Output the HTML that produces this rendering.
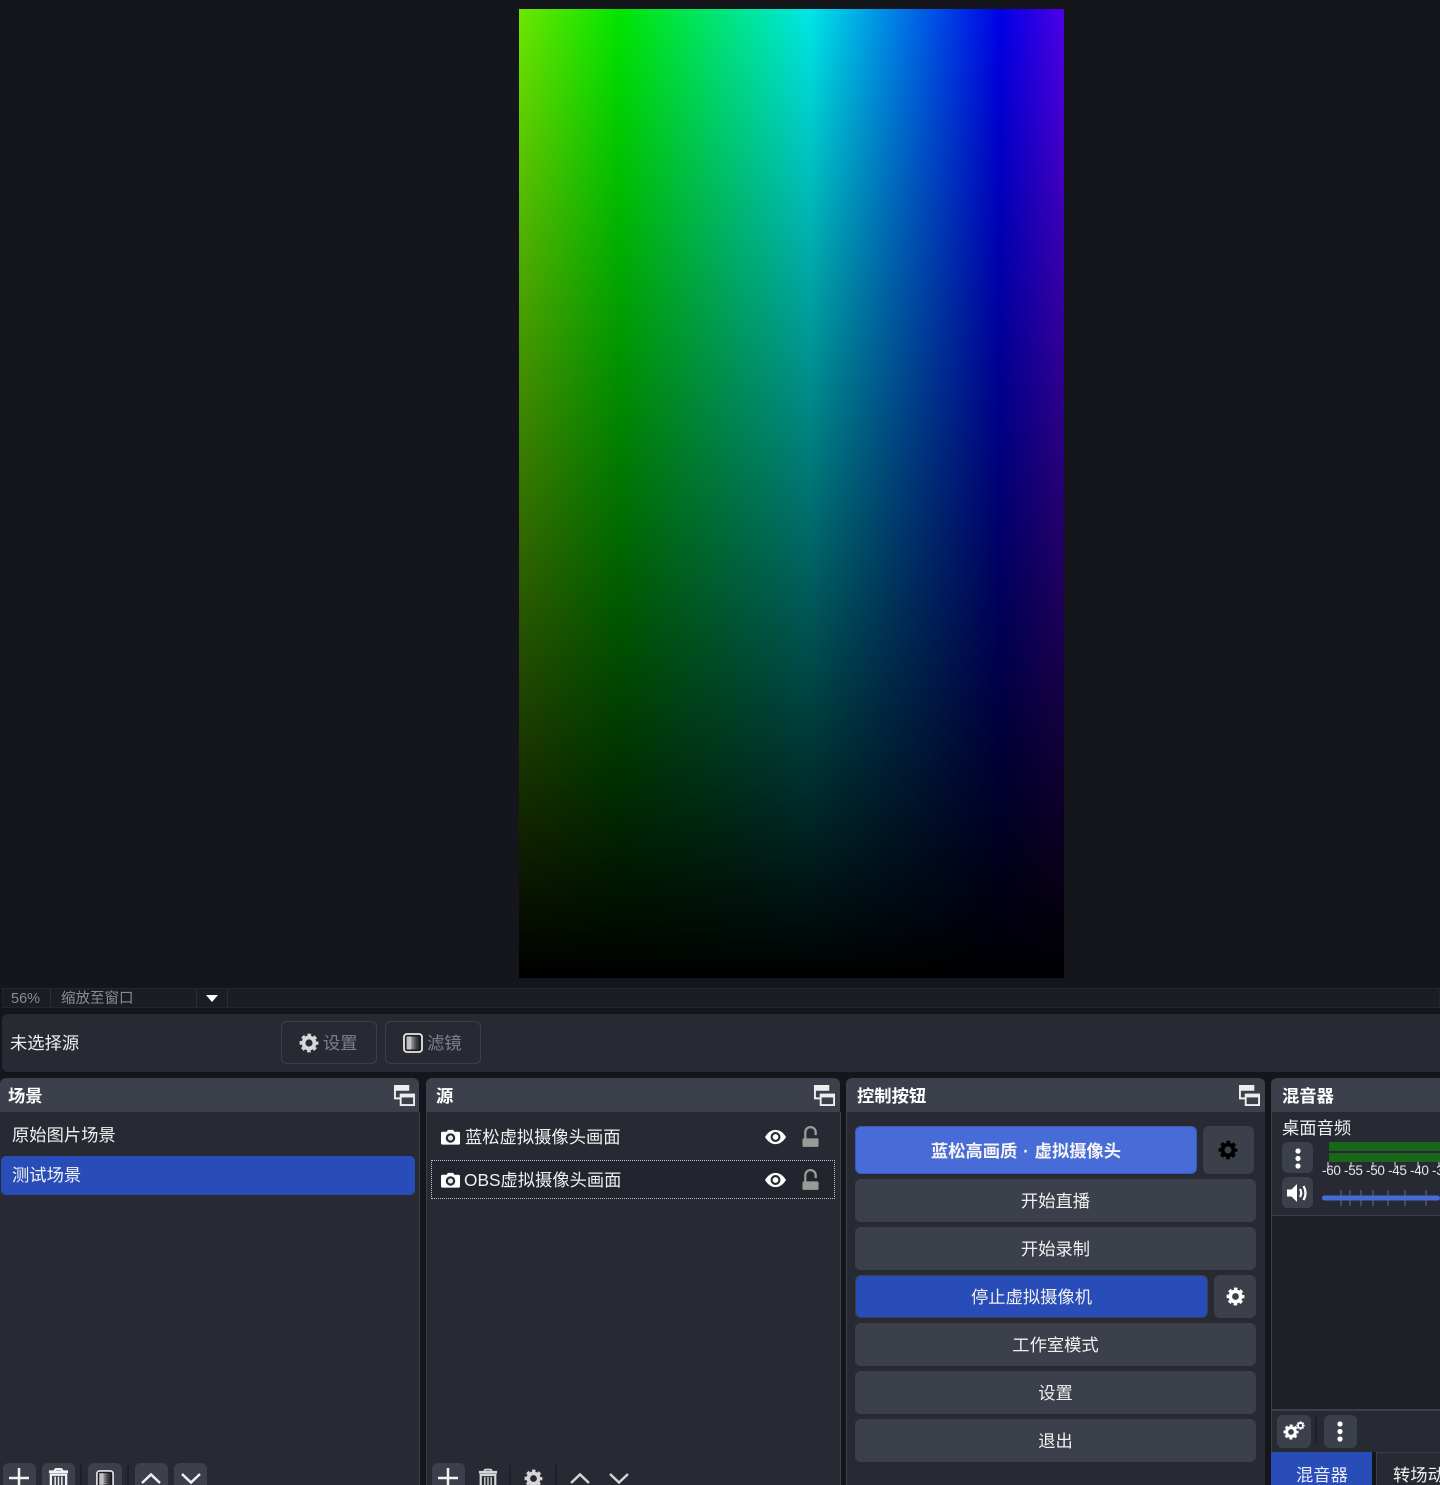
<!DOCTYPE html>
<html lang="zh"><head><meta charset="utf-8"><style>
*{box-sizing:border-box}
html,body{margin:0;padding:0;width:1440px;height:1485px;overflow:hidden;background:#14161c}
#root{width:1440px;height:1485px;position:relative;overflow:hidden;background:#14161c;font-family:"Liberation Sans","Noto Sans CJK SC",sans-serif;font-size:17.3px;color:#fff}
.a{position:absolute}
.t{position:absolute;white-space:nowrap;line-height:24px;height:24px}
.hd{position:absolute;top:1078px;height:34px;background:#3c404b;border-radius:6px 6px 0 0}
.body{position:absolute;top:1112px;height:373px;background:#272a33}
.b{position:absolute;font-weight:700;top:1084px;line-height:24px;white-space:nowrap}
.btn{position:absolute;background:#3c404b;border-radius:6px;display:flex;align-items:center;justify-content:center;color:#f0f0f0;padding-bottom:2px}
.tb{position:absolute;background:#3c404b;border-radius:6px}
svg{position:absolute;display:block;overflow:visible}
.sep{position:absolute;width:2px;background:#1e2028}
.m{position:absolute;top:1158px;line-height:24px;font-size:13.500px;color:#e6e6e6;letter-spacing:-.3px;white-space:nowrap}
</style></head><body><div id="root">
<svg width="0" height="0" style="position:absolute"><defs>
<linearGradient id="fg" x1="0" x2="1" y1="0" y2="0"><stop offset="0" stop-color="#b8b8b8"/><stop offset=".35" stop-color="#c8c8c8"/><stop offset=".7" stop-color="#555"/><stop offset="1" stop-color="#1c1e24"/></linearGradient>
<symbol id="gear" viewBox="0 0 24 24"><circle cx="12" cy="12" r="6.600" fill="none" stroke="currentColor" stroke-width="4.600"/><circle cx="12" cy="12" r="9.600" fill="none" stroke="currentColor" stroke-width="3.400" stroke-dasharray="4.300 3.240" stroke-dashoffset="2.150"/></symbol>
<symbol id="float" viewBox="0 0 22 22"><path d="M1 1h14v4H1zM1 5v9h6" fill="none" stroke="#eee" stroke-width="2"/><rect x="1" y="1" width="14" height="4" fill="#eee"/><rect x="7" y="10" width="14" height="11" fill="#3c404b" stroke="#eee" stroke-width="2"/><rect x="7" y="10" width="14" height="3" fill="#eee"/></symbol>
<symbol id="cam" viewBox="0 0 20 16"><path d="M1.500 2.500H6L7.200 .5h5.600L14 2.500h4.500a1.500 1.500 0 0 1 1.500 1.500v10.500a1.500 1.500 0 0 1-1.500 1.500H1.500A1.500 1.500 0 0 1 0 14.500V4a1.500 1.500 0 0 1 1.500-1.500z" fill="#fff"/><circle cx="10" cy="9" r="5" fill="#272a33"/><circle cx="10" cy="9" r="2.700" fill="#e8e8e8"/></symbol>
<symbol id="eye" viewBox="0 0 22 16"><path d="M0 8C3 3 7 .5 11 .5S19 3 22 8c-3 5-7 7.500-11 7.500S3 13 0 8z" fill="#fff"/><circle cx="11" cy="8" r="5.200" fill="#272a33"/><circle cx="11" cy="8" r="3" fill="#fff"/></symbol>
<symbol id="lock" viewBox="0 0 18 22"><path d="M3.500 14V6.500a5.500 5.500 0 0 1 11 0v3" fill="none" stroke="#9b9b95" stroke-width="2.400"/><rect x="0.500" y="13" width="17" height="9" rx="1.500" fill="#9b9b95"/></symbol>
<symbol id="trash" viewBox="0 0 22 24"><path d="M1 4h20" stroke="currentColor" stroke-width="3"/><path d="M7 3q0-2 2-2h4q2 0 2 2" fill="none" stroke="currentColor" stroke-width="2"/><path d="M3 7h16v17H3z" fill="none" stroke="currentColor" stroke-width="2.400"/><path d="M7.500 9v13M11 9v13M14.500 9v13" stroke="currentColor" stroke-width="1.500"/></symbol>
<symbol id="filter" viewBox="0 0 20 20"><rect x="1" y="1" width="18" height="18" rx="3" fill="#1c1e24" stroke="#e8e8e8" stroke-width="1.800"/><rect x="3.500" y="3.500" width="13" height="13" fill="url(#fg)"/><path d="M9 3.500v13M11 3.500v13M13 3.500v13" stroke="#2a2c32" stroke-width="1" stroke-dasharray="1 1"/></symbol>
</defs></svg>

<!-- preview -->
<div class="a" style="left:519px;top:9px;width:545px;height:969px;background:linear-gradient(to bottom,rgba(0,0,0,0) 0%,rgba(0,0,0,.5) 50%,rgba(0,0,0,1) 100%),linear-gradient(to right,#6ee600 0,#00e600 101px,#00e6e6 291px,#0000e6 481px,#4d00e6 545px)"></div>

<!-- status bar -->
<div class="a" style="left:2px;top:988px;width:1438px;height:20px;background:#1b1d24;border:1px solid #23262e"></div>
<div class="a" style="left:50px;top:989px;width:1px;height:18px;background:#2b2e37"></div>
<div class="a" style="left:196px;top:989px;width:1px;height:18px;background:#2b2e37"></div>
<div class="a" style="left:227px;top:989px;width:1px;height:18px;background:#2b2e37"></div>
<div class="t" style="left:11px;top:987px;font-size:14.500px;color:#8a8c91">56%</div>
<div class="t" style="left:61px;top:987px;font-size:14.500px;color:#8a8c91">缩放至窗口</div>
<svg style="left:206px;top:995px" width="12" height="7"><path d="M0 0h12L6 7z" fill="#fff"/></svg>

<!-- properties bar -->
<div class="a" style="left:2px;top:1014px;width:1438px;height:58px;background:#272a33;border-radius:6px 0 0 6px"></div>
<div class="t" style="left:10px;top:1031px;color:#f0f0f0">未选择源</div>
<div class="a" style="left:281px;top:1021px;width:96px;height:43px;border:1px solid #3c404b;border-radius:6px"></div>
<svg style="left:299px;top:1033px;color:#d8d8d8" width="20" height="20"><use href="#gear" width="20" height="20"/></svg>
<div class="t" style="left:323px;top:1031px;color:#7f8188">设置</div>
<div class="a" style="left:385px;top:1021px;width:96px;height:43px;border:1px solid #3c404b;border-radius:6px"></div>
<svg style="left:403px;top:1033px" width="20" height="20"><use href="#filter" width="20" height="20"/></svg>
<div class="t" style="left:427px;top:1031px;color:#7f8188">滤镜</div>

<!-- docks -->
<div class="body" style="left:0;width:419px"></div>
<div class="hd" style="left:0;width:419px"></div>
<div class="body" style="left:426px;width:414px"></div>
<div class="hd" style="left:426px;width:414px"></div>
<div class="body" style="left:846px;width:419px"></div>
<div class="hd" style="left:846px;width:419px"></div>
<div class="body" style="left:1271px;width:169px;height:340px"></div>
<div class="hd" style="left:1271px;width:169px;border-radius:6px 0 0 0"></div>
<div class="a" style="left:419px;top:1112px;width:1px;height:373px;background:#3c404b"></div>
<div class="a" style="left:426px;top:1112px;width:1px;height:373px;background:#3c404b"></div>
<div class="a" style="left:840px;top:1112px;width:1px;height:373px;background:#3c404b"></div>
<div class="a" style="left:846px;top:1112px;width:1px;height:373px;background:#3c404b"></div>
<div class="a" style="left:1271px;top:1112px;width:1px;height:340px;background:#3c404b"></div>

<div class="b" style="left:8px">场景</div>
<div class="b" style="left:436px">源</div>
<div class="b" style="left:857px">控制按钮</div>
<div class="b" style="left:1282px">混音器</div>
<svg style="left:394px;top:1085px" width="21" height="21"><use href="#float" width="21" height="21"/></svg>
<svg style="left:814px;top:1085px" width="21" height="21"><use href="#float" width="21" height="21"/></svg>
<svg style="left:1239px;top:1085px" width="21" height="21"><use href="#float" width="21" height="21"/></svg>

<!-- scenes -->
<div class="t" style="left:12px;top:1123px;color:#f0f0f0">原始图片场景</div>
<div class="a" style="left:1px;top:1156px;width:414px;height:39px;background:#284cb8;border-radius:5px"></div>
<div class="t" style="left:12px;top:1163px;color:#f4f4f4">测试场景</div>

<div class="tb" style="left:3px;top:1463px;width:33px;height:30px"></div>
<svg style="left:9px;top:1468px" width="20" height="16"><path d="M10 0v20M0 10h20" stroke="#f2f2f2" stroke-width="2.500"/></svg>
<div class="tb" style="left:42px;top:1463px;width:33px;height:30px"></div>
<svg style="left:48px;top:1468px;color:#f2f2f2" width="21" height="23"><use href="#trash" width="21" height="23"/></svg>
<div class="sep" style="left:80px;top:1465px;height:20px"></div>
<div class="tb" style="left:88px;top:1463px;width:34px;height:30px"></div>
<svg style="left:96px;top:1470px" width="18" height="20"><use href="#filter" width="18" height="18"/></svg>
<div class="sep" style="left:127px;top:1465px;height:20px"></div>
<div class="tb" style="left:135px;top:1463px;width:33px;height:30px"></div>
<svg style="left:141px;top:1473px" width="20" height="11"><path d="M1 10L10 1.500 19 10" fill="none" stroke="#f2f2f2" stroke-width="2.500"/></svg>
<div class="tb" style="left:174px;top:1463px;width:33px;height:30px"></div>
<svg style="left:181px;top:1473px" width="20" height="11"><path d="M1 1l9 8.500L19 1" fill="none" stroke="#f2f2f2" stroke-width="2.500"/></svg>

<!-- sources -->
<svg style="left:441px;top:1129px" width="19" height="16"><use href="#cam" width="19" height="16"/></svg>
<div class="t" style="left:465px;top:1125px;color:#f0f0f0">蓝松虚拟摄像头画面</div>
<svg style="left:765px;top:1129px" width="21" height="16"><use href="#eye" width="21" height="16"/></svg>
<svg style="left:802px;top:1126px" width="17" height="21"><use href="#lock" width="17" height="21"/></svg>
<div class="a" style="left:431px;top:1160px;width:404px;height:39px;border:1px dotted #c8c8c8;background:#22252d"></div>
<svg style="left:441px;top:1172px" width="19" height="16"><use href="#cam" width="19" height="16"/></svg>
<div class="t" style="left:464px;top:1168px;color:#f0f0f0">OBS虚拟摄像头画面</div>
<svg style="left:765px;top:1172px" width="21" height="16"><use href="#eye" width="21" height="16"/></svg>
<svg style="left:802px;top:1169px" width="17" height="21"><use href="#lock" width="17" height="21"/></svg>

<div class="tb" style="left:432px;top:1463px;width:33px;height:30px"></div>
<svg style="left:438px;top:1468px" width="20" height="16"><path d="M10 0v20M0 10h20" stroke="#f2f2f2" stroke-width="2.500"/></svg>
<svg style="left:478px;top:1468px;color:#d5d5d5" width="20" height="23"><use href="#trash" width="20" height="23"/></svg>
<div class="sep" style="left:509px;top:1465px;height:20px"></div>
<svg style="left:524px;top:1469px;color:#d5d5d5" width="19" height="19"><use href="#gear" width="19" height="19"/></svg>
<div class="sep" style="left:555px;top:1465px;height:20px"></div>
<svg style="left:570px;top:1473px" width="20" height="11"><path d="M1 10L10 1.500 19 10" fill="none" stroke="#d5d5d5" stroke-width="2.500"/></svg>
<svg style="left:609px;top:1473px" width="20" height="11"><path d="M1 1l9 8.500L19 1" fill="none" stroke="#d5d5d5" stroke-width="2.500"/></svg>

<!-- controls -->
<div class="btn" style="left:855px;top:1126px;width:342px;height:48px;background:#476bd7;border:1px solid #3a5bbd;font-weight:700;color:#f4f4f4;word-spacing:1px">蓝松高画质 · 虚拟摄像头</div>
<div class="btn" style="left:1203px;top:1126px;width:51px;height:48px"></div>
<svg style="left:1218px;top:1140px;color:#000" width="20" height="20"><use href="#gear" width="20" height="20"/></svg>
<div class="btn" style="left:855px;top:1179px;width:401px;height:43px">开始直播</div>
<div class="btn" style="left:855px;top:1227px;width:401px;height:43px">开始录制</div>
<div class="btn" style="left:855px;top:1275px;width:353px;height:43px;background:#284cb8;border:1px solid #3c404b">停止虚拟摄像机</div>
<div class="btn" style="left:1214px;top:1275px;width:42px;height:43px"></div>
<svg style="left:1226px;top:1287px;color:#fff" width="19" height="19"><use href="#gear" width="19" height="19"/></svg>
<div class="btn" style="left:855px;top:1323px;width:401px;height:43px">工作室模式</div>
<div class="btn" style="left:855px;top:1371px;width:401px;height:43px">设置</div>
<div class="btn" style="left:855px;top:1419px;width:401px;height:43px">退出</div>

<!-- mixer -->
<div class="t" style="left:1282px;top:1116px;color:#f0f0f0">桌面音频</div>
<div class="tb" style="left:1282px;top:1142px;width:31px;height:31px"></div>
<svg style="left:1295px;top:1148px" width="6" height="20"><circle cx="3" cy="3" r="2.600" fill="#fff"/><circle cx="3" cy="10.500" r="2.600" fill="#fff"/><circle cx="3" cy="18" r="2.600" fill="#fff"/></svg>
<div class="tb" style="left:1282px;top:1177px;width:31px;height:31px"></div>
<svg style="left:1286px;top:1183px" width="24" height="20"><path d="M1 6.500h4.500L11 1v18l-5.500-5.500H1z" fill="#fff"/><path d="M14 6q2.500 4 0 8M17.500 3q4 7 0 14" fill="none" stroke="#fff" stroke-width="2.200"/></svg>
<div class="a" style="left:1329px;top:1142px;width:111px;height:9px;background:#1a661a"></div>
<div class="a" style="left:1329px;top:1153px;width:111px;height:9px;background:#1a661a"></div>
<svg style="left:1322px;top:1162px" width="118" height="5"><path d="M6 0v5M29 0v5M51 0v5M73 0v5M96 0v5M117 0v5" stroke="#ddd" stroke-width="1"/></svg>
<div class="m" style="left:1322px;top:1159px">-60</div>
<div class="m" style="left:1344px;top:1159px">-55</div>
<div class="m" style="left:1366px;top:1159px">-50</div>
<div class="m" style="left:1388px;top:1159px">-45</div>
<div class="m" style="left:1410px;top:1159px">-40</div>
<div class="m" style="left:1432px;top:1159px">-35</div>
<svg style="left:1322px;top:1190px" width="118" height="17"><path d="M19 0v16M28 0v16M39 0v16M51 0v16M66 0v16M83 0v16M104 0v16" stroke="#6a6d76" stroke-width="1"/><rect x="0" y="5.500" width="118" height="5" rx="2.500" fill="#476bd7"/></svg>
<div class="a" style="left:1272px;top:1215px;width:168px;height:196px;background:#1e2028;border-top:1px solid #3c404b;border-bottom:2px solid #3c404b"></div>

<div class="tb" style="left:1277px;top:1415px;width:34px;height:33px"></div>
<svg style="left:1283px;top:1424px;color:#fff" width="16" height="16"><use href="#gear" width="16" height="16"/></svg>
<svg style="left:1296px;top:1421px;color:#fff" width="9" height="9"><use href="#gear" width="9" height="9"/></svg>
<div class="sep" style="left:1315px;top:1417px;height:26px"></div>
<div class="tb" style="left:1324px;top:1415px;width:33px;height:33px"></div>
<svg style="left:1337px;top:1421px" width="6" height="20"><circle cx="3" cy="3" r="2.600" fill="#fff"/><circle cx="3" cy="10.500" r="2.600" fill="#fff"/><circle cx="3" cy="18" r="2.600" fill="#fff"/></svg>

<div class="a" style="left:1271px;top:1452px;width:101px;height:33px;background:#284cb8"></div>
<div class="a" style="left:1372px;top:1452px;width:4px;height:33px;background:#14161c"></div>
<div class="a" style="left:1376px;top:1452px;width:64px;height:33px;background:#272a33;border-top:1px solid #3c404b;border-left:1px solid #3c404b"></div>
<div class="t" style="left:1296px;top:1463px;color:#e8ecf8">混音器</div>
<div class="t" style="left:1393px;top:1463px;width:47px;overflow:hidden;color:#f0f0f0">转场动画</div>
</div></body></html>
